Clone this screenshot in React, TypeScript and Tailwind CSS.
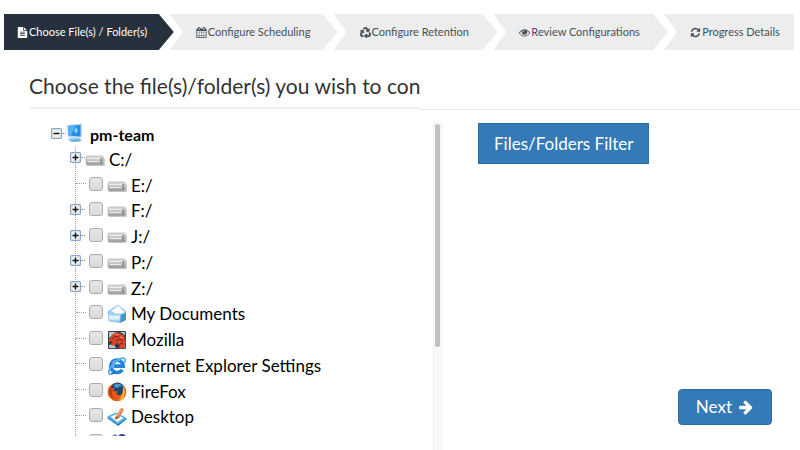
import type { ReactNode } from "react";
import { FaRecycle } from "react-icons/fa";

type IconName = "drive" | "documents" | "mozilla" | "ie" | "firefox" | "desktop" | "cookies";

type TreeNode = {
  id: string;
  label: string;
  icon: IconName;
  expandable?: boolean;
  checkable?: boolean;
};

const NODES: TreeNode[] = [
  { id: "c", label: "C:/", icon: "drive", expandable: true, checkable: false },
  { id: "e", label: "E:/", icon: "drive" },
  { id: "f", label: "F:/", icon: "drive", expandable: true },
  { id: "j", label: "J:/", icon: "drive", expandable: true },
  { id: "p", label: "P:/", icon: "drive", expandable: true },
  { id: "z", label: "Z:/", icon: "drive", expandable: true },
  { id: "docs", label: "My Documents", icon: "documents" },
  { id: "mozilla", label: "Mozilla", icon: "mozilla" },
  { id: "ie", label: "Internet Explorer Settings", icon: "ie" },
  { id: "firefox", label: "FireFox", icon: "firefox" },
  { id: "desktop", label: "Desktop", icon: "desktop" },
];

function Glyph({ d, className }: { d: string; className: string }) {
  return (
    <svg viewBox="0 0 1792 1792" fill="currentColor" className={className} aria-hidden="true">
      <path d={d} />
    </svg>
  );
}

const FILE_PATH =
  "M1596 476q14 14 28 36h-472v-472q22 14 36 28zm-476 164h544v1056q0 40-28 68t-68 28h-1344q-40 0-68-28t-28-68v-1600q0-40 28-68t68-28h800v544q0 40 28 68t68 28zm160 736v-64q0-14-9-23t-23-9h-704q-14 0-23 9t-9 23v64q0 14 9 23t23 9h704q14 0 23-9t9-23zm0-256v-64q0-14-9-23t-23-9h-704q-14 0-23 9t-9 23v64q0 14 9 23t23 9h704q14 0 23-9t9-23zm0-256v-64q0-14-9-23t-23-9h-704q-14 0-23 9t-9 23v64q0 14 9 23t23 9h704q14 0 23-9t9-23z";
const CALENDAR_PATH =
  "M192 1664h288v-288h-288v288zm352 0h320v-288h-320v288zm-352-352h288v-320h-288v320zm352 0h320v-320h-320v320zm-352-384h288v-288h-288v288zm736 736h320v-288h-320v288zm-384-736h320v-288h-320v288zm768 736h288v-288h-288v288zm-384-352h320v-320h-320v320zm-352-864v-288q0-13-9.5-22.5t-22.5-9.5h-64q-13 0-22.5 9.5t-9.5 22.5v288q0 13 9.5 22.5t22.5 9.5h64q13 0 22.5-9.5t9.5-22.5zm736 864h288v-320h-288v320zm-384-384h320v-288h-320v288zm384 0h288v-288h-288v288zm32-480v-288q0-13-9.5-22.5t-22.5-9.5h-64q-13 0-22.5 9.5t-9.5 22.5v288q0 13 9.5 22.5t22.5 9.5h64q13 0 22.5-9.5t9.5-22.5zm384-64v1280q0 52-38 90t-90 38h-1408q-52 0-90-38t-38-90v-1280q0-52 38-90t90-38h128v-96q0-66 47-113t113-47h64q66 0 113 47t47 113v96h384v-96q0-66 47-113t113-47h64q66 0 113 47t47 113v96h128q52 0 90 38t38 90z";
const EYE_PATH =
  "M1664 960q-152-236-381-353 61 104 61 225 0 185-131.5 316.5t-316.5 131.5-316.5-131.5-131.5-316.5q0-121 61-225-229 117-381 353 133 205 333.5 326.5t434.5 121.5 434.5-121.5 333.5-326.5zm-720-384q0-20-14-34t-34-14q-125 0-214.5 89.5t-89.5 214.5q0 20 14 34t34 14 34-14 14-34q0-86 61-147t147-61q20 0 34-14t14-34zm848 384q0 34-20 69-140 230-376.5 368.5t-499.5 138.5-499.5-139-376.5-368q-20-35-20-69t20-69q140-229 376.5-368t499.5-139 499.5 139 376.5 368q20 35 20 69z";
const REFRESH_PATH =
  "M1639 1056q0 5-1 7-64 268-268 434.5t-478 166.5q-146 0-282.5-55t-243.5-157l-129 129q-19 19-45 19t-45-19-19-45v-448q0-26 19-45t45-19h448q26 0 45 19t19 45-19 45l-137 137q71 66 161 102t187 36q134 0 250-65t186-179q11-17 53-117 8-23 30-23h192q13 0 22.5 9.5t9.5 22.5zm25-800v448q0 26-19 45t-45 19h-448q-26 0-45-19t-19-45 19-45l138-138q-148-137-349-137-134 0-250 65t-186 179q-11 17-53 117-8 23-30 23h-199q-13 0-22.5-9.5t-9.5-22.5v-7q65-268 270-434.5t480-166.5q146 0 284 55.5t245 156.5l130-129q19-19 45-19t45 19 19 45z";
const ARROW_PATH =
  "M1600 960q0 54-37 91l-651 651q-39 37-91 37-51 0-90-37l-75-75q-38-38-38-91t38-91l293-293h-704q-52 0-84.5-37.5t-32.5-90.5v-128q0-53 32.5-90.5t84.5-37.5h704l-293-294q-38-36-38-90t38-90l75-75q38-38 90-38 53 0 91 38l651 651q37 35 37 90z";

const STEPS: { label: string; icon: ReactNode; cls: string }[] = [
  {
    label: "Choose File(s) / Folder(s)",
    icon: <Glyph d={FILE_PATH} className="size-[11px]" />,
    cls: "flex-[170_1_170px] pl-[13px] bg-[#26313d] text-white [clip-path:polygon(0_0,calc(100%-15px)_0,100%_50%,calc(100%-15px)_100%,0_100%)]",
  },
  {
    label: "Configure Scheduling",
    icon: <Glyph d={CALENDAR_PATH} className="size-[11px]" />,
    cls: "flex-[168_1_168px] -ml-1 pl-[26px] bg-[#ededed] text-[#44505c] [clip-path:polygon(0_0,calc(100%-15px)_0,100%_50%,calc(100%-15px)_100%,0_100%,13px_50%)]",
  },
  {
    label: "Configure Retention",
    icon: <FaRecycle stroke="currentColor" strokeWidth={28} className="size-[11px]" />,
    cls: "flex-[164_1_164px] -ml-1 pl-[26px] bg-[#ededed] text-[#44505c] [clip-path:polygon(0_0,calc(100%-15px)_0,100%_50%,calc(100%-15px)_100%,0_100%,13px_50%)]",
  },
  {
    label: "Review Configurations",
    icon: <Glyph d={EYE_PATH} className="size-[11px]" />,
    cls: "flex-[175_1_175px] -ml-1 pl-[26px] bg-[#ededed] text-[#44505c] [clip-path:polygon(0_0,calc(100%-15px)_0,100%_50%,calc(100%-15px)_100%,0_100%,13px_50%)]",
  },
  {
    label: "Progress Details",
    icon: <Glyph d={REFRESH_PATH} className="size-[11px]" />,
    cls: "flex-[130_1_130px] -ml-1 pl-[26px] bg-[#ededed] text-[#44505c] [clip-path:polygon(0_0,100%_0,100%_100%,0_100%,13px_50%)]",
  },
];

function NodeIcon({ name }: { name: IconName }) {
  if (name === "drive") {
    return (
      <svg viewBox="0 0 20 20" className="size-5 shrink-0" aria-hidden="true">
        <defs>
          <linearGradient id="drive" x1="0" y1="0" x2="0" y2="1">
            <stop offset="0" stopColor="#dedede" />
            <stop offset="0.5" stopColor="#c4c4c4" />
            <stop offset="1" stopColor="#979797" />
          </linearGradient>
        </defs>
        <path d="M3 7h15l2 2v7H2l-1-2V9z" fill="#8c8c8c" opacity="0.4" />
        <rect x="1" y="6" width="17.5" height="9" rx="1.5" fill="url(#drive)" stroke="#b0b0b0" strokeWidth="0.7" />
        <path d="M2 8.5h13M3 11.5h11" stroke="#ececec" strokeWidth="1.2" />
        <path d="M16.2 8v6" stroke="#858585" strokeWidth="1.4" />
      </svg>
    );
  }
  if (name === "documents") {
    return (
      <svg viewBox="0 0 20 20" className="size-5 shrink-0" aria-hidden="true">
        <path d="M1 7l10-6.5L19 7v9l-6 3-11-2z" fill="#9cc9ef" />
        <path d="M3 8l8-6.5L18 8l-2 6H4z" fill="#fbfdff" stroke="#b5d5ef" strokeWidth="0.6" />
        <path d="M1 8h5l2 2h6l-1 8-11-1z" fill="#a9d3f5" stroke="#7db5e4" strokeWidth="0.6" />
        <path d="M2 11.5h11l-.6 4H2.6z" fill="#e2f2fd" />
        <path d="M14 10.5l5-2.5v8l-6 3z" fill="#4b94d3" />
      </svg>
    );
  }
  if (name === "mozilla") {
    return (
      <svg viewBox="0 0 20 20" className="size-5 shrink-0" aria-hidden="true">
        <rect x="1" y="1" width="18" height="18" rx="1" fill="#33404e" />
        <path d="M2 2h7L2 8zM13 2h5v3zM2 18v-3l5-1 2 4zM16 17l2-3v4z" fill="#b8c8d4" />
        <path d="M2 9l4-5 5-2 2 2 4 1 1 5 1 2-2 6-5 1 1-4-3-2-3 3-3-1-1-2 3-2-4 1z" fill="#d9452a" />
        <path d="M5 9l4-3 3 1M9 11l4-2 3 2M13 14l3-1" fill="none" stroke="#7a1d14" strokeWidth="1" />
        <path d="M8 4l3 1M13 7l3 1" stroke="#ff9b68" strokeWidth="0.9" />
        <path d="M3 12l3 0-3 2zM8 15l3 0-2 2z" fill="#1d242c" />
      </svg>
    );
  }
  if (name === "ie") {
    return (
      <svg viewBox="0 0 20 20" className="size-5 shrink-0" fill="none" aria-hidden="true">
        <path d="M15.2 13.7a6.2 6.2 0 1 1 1-3.6H6.5" stroke="#2384df" strokeWidth="3.6" />
        <path d="M5.3 7.4a6 6 0 0 1 8-2.6" stroke="#73bff7" strokeWidth="1.2" />
        <path d="M3.5 18C.4 18.2 1.4 13 6.5 7.8S18.2-.2 18.2 4.2c0 1-.3 1.8-.8 2.7" stroke="#4eacf2" strokeWidth="1.7" />
        <path d="M3.5 18c1.5 0 3.2-.7 4.8-1.8" stroke="#1767bb" strokeWidth="1.4" />
      </svg>
    );
  }
  if (name === "firefox") {
    return (
      <svg viewBox="0 0 20 20" className="size-5 shrink-0" aria-hidden="true">
        <circle cx="10" cy="10" r="9.3" fill="#e76016" />
        <circle cx="10.5" cy="7.8" r="7.2" fill="#1d4477" />
        <path d="M8 2c3-1 7 0 8 3l-3-1-2 2-4-1z" fill="#4a9ccc" />
        <path d="M2 4l2 2 4 .3-2 2 2 1 3 .2-2 2 3 2 4-2 1-4-1-4c4 3 4 10-1 13-6 3-13 0-14-6z" fill="#e65b17" />
        <path d="M16 4c4 6 2 13-5 15 3-3 5-6 5-15z" fill="#f8b62d" />
        <path d="M3 6c-2 5 0 9 4 11-2-3-3-6-1-9z" fill="#b93c16" />
      </svg>
    );
  }
  if (name === "desktop") {
    return (
      <svg viewBox="0 0 20 20" className="size-5 shrink-0" aria-hidden="true">
        <path d="M0 11l9-4 11 5-9 7z" fill="#247bb9" />
        <path d="M0 9.5l9-4 11 5.5-9.5 6.5z" fill="#56b1e6" />
        <path d="M3.5 9.8l6-2.7 7 4-6 3.9z" fill="#f4faff" />
        <path d="M8 12.5l1-3.5 5-8 3 1-5 9.5z" fill="#e9783c" />
        <path d="M10 9.3l5-7.3" stroke="#ffc391" strokeWidth="1" />
        <path d="M8 12.5l1-3 2 1z" fill="#6b4d40" />
      </svg>
    );
  }
  return (
    <svg viewBox="0 0 20 20" className="size-5 shrink-0" aria-hidden="true">
      <path d="M5 3l3-2 3 2v8H5z" fill="#7b87b5" />
      <circle cx="15" cy="5" r="4" fill="#343f9c" />
    </svg>
  );
}

function ComputerIcon() {
  return (
    <svg viewBox="0 0 18 20" className="h-5 w-[18px] shrink-0" aria-hidden="true">
      <path d="M3 15l9-1 4 3-2 2H5l-3-2z" fill="#a9d2ee" />
      <path d="M1 2l14-1.5 1 .5v13l-3 1L2 14z" fill="#b8d7ef" />
      <path d="M2.5 3l12-1v11.5l-12-1z" fill="#258ae5" />
      <path d="M2.5 3l7-.6L5 12.5H2.5z" fill="#55b0f7" />
      <path d="M10 4l2 3-2 4-2-3z" fill="#86d0ff" />
      <path d="M4 17l8-1 3 1-3 1.4H6z" fill="#6aabd6" />
    </svg>
  );
}

function Expander({ open = false, label }: { open?: boolean; label: string }) {
  return (
    <button type="button" aria-label={label} aria-expanded={open} className="size-[11px] shrink-0 cursor-pointer">
      <svg viewBox="0 0 11 11" className="size-[11px]" aria-hidden="true">
        <rect x="0.6" y="0.6" width="9.8" height="9.8" rx="1" fill="#f0f0ec" stroke="#86a8cc" strokeWidth="1.2" />
        <path d={open ? "M2.5 5.5h6" : "M2.5 5.5h6M5.5 2.5v6"} stroke="#111111" strokeWidth="1.4" />
      </svg>
    </button>
  );
}

function TreeRow({ node }: { node: TreeNode }) {
  return (
    <li className="flex items-center">
      <span className="flex w-[19px] shrink-0 items-center pb-1">
        {node.expandable ? (
          <>
            <Expander label={`Expand ${node.label}`} />
            <span className="w-1 border-t border-dotted border-[#9a9a9a]" />
          </>
        ) : (
          <span className="ml-[6px] w-[10px] border-t border-dotted border-[#9a9a9a]" />
        )}
      </span>
      {node.checkable === false ? (
        <span className="-ml-1 flex items-center gap-1">
          <NodeIcon name={node.icon} />
          {node.label}
        </span>
      ) : (
        <>
          <input
            id={node.id}
            type="checkbox"
            className="mb-1 size-[14px] shrink-0 appearance-none rounded-[3px] border border-[#ababab] bg-linear-to-b from-[#e6e6e6] to-[#dadada] checked:bg-[#337ab7]"
          />
          <label htmlFor={node.id} className="ml-1 flex items-center gap-1 whitespace-nowrap">
            <NodeIcon name={node.icon} />
            {node.label}
          </label>
        </>
      )}
    </li>
  );
}

export default function App() {
  return (
    <div className="flex min-h-screen flex-col bg-white font-['Lato',sans-serif] text-black">
      <nav aria-label="Backup steps" className="pt-[14px] pr-[6px] pl-1">
        <ol className="flex h-9 text-[11px]">
          {STEPS.map((step) => (
            <li key={step.label} className={`flex items-center gap-px whitespace-nowrap ${step.cls}`}>
              {step.icon}
              {step.label}
            </li>
          ))}
        </ol>
      </nav>

      <header className="flex">
        <div className="w-[52.5%] overflow-hidden pb-px pl-[29px]">
          <h1 className="border-b-2 border-[#f0f0f0] pt-5 pb-[5px] text-[21px] leading-8 whitespace-nowrap text-[#333333]">
            Choose the file(s)/folder(s) you wish to conf
          </h1>
        </div>
        <div className="flex-1 border-b border-[#e8e8e8]" />
      </header>

      <main className="flex flex-1 pt-[13px]">
        <div className="flex w-[442px] shrink-0">
          <section aria-label="Files and folders" className="h-[313px] flex-1 overflow-hidden pl-[51px] text-[17px] leading-6">
            <div className="flex h-6 items-center">
              <span className="flex items-center pb-1">
                <Expander open label="Collapse pm-team" />
                <span className="w-1 border-t border-dotted border-[#9a9a9a]" />
                <ComputerIcon />
              </span>
              <span className="ml-[6px] text-base font-bold">pm-team</span>
            </div>
            <div className="relative ml-[19px]">
              <span className="absolute inset-y-0 left-[5px] border-l border-dotted border-[#9a9a9a]" />
              <ul className="relative grid h-[309px] auto-rows-fr">
                {NODES.map((node) => (
                  <TreeRow key={node.id} node={node} />
                ))}
                <TreeRow node={{ id: "cookies", label: "", icon: "cookies" }} />
              </ul>
            </div>
          </section>
          <div className="w-[9px] border-x border-[#eeeeee] bg-[#f9f9f9] px-px pt-px">
            <div className="h-[223px] rounded-full bg-[#c1c1c1]" />
          </div>
        </div>

        <div className="flex flex-1 flex-col items-start justify-between pr-7 pb-[25px] pl-9 text-[17px] text-white">
          <button type="button" className="h-[41px] border border-[#2e6da4] bg-[#337ab7] px-[15px]">
            Files/Folders Filter
          </button>
          <button
            type="button"
            className="flex h-9 items-center gap-[6px] self-end rounded-sm border border-[#2e6da4] bg-[#337ab7] px-[17px]"
          >
            Next
            <Glyph d={ARROW_PATH} className="size-4" />
          </button>
        </div>
      </main>
    </div>
  );
}
